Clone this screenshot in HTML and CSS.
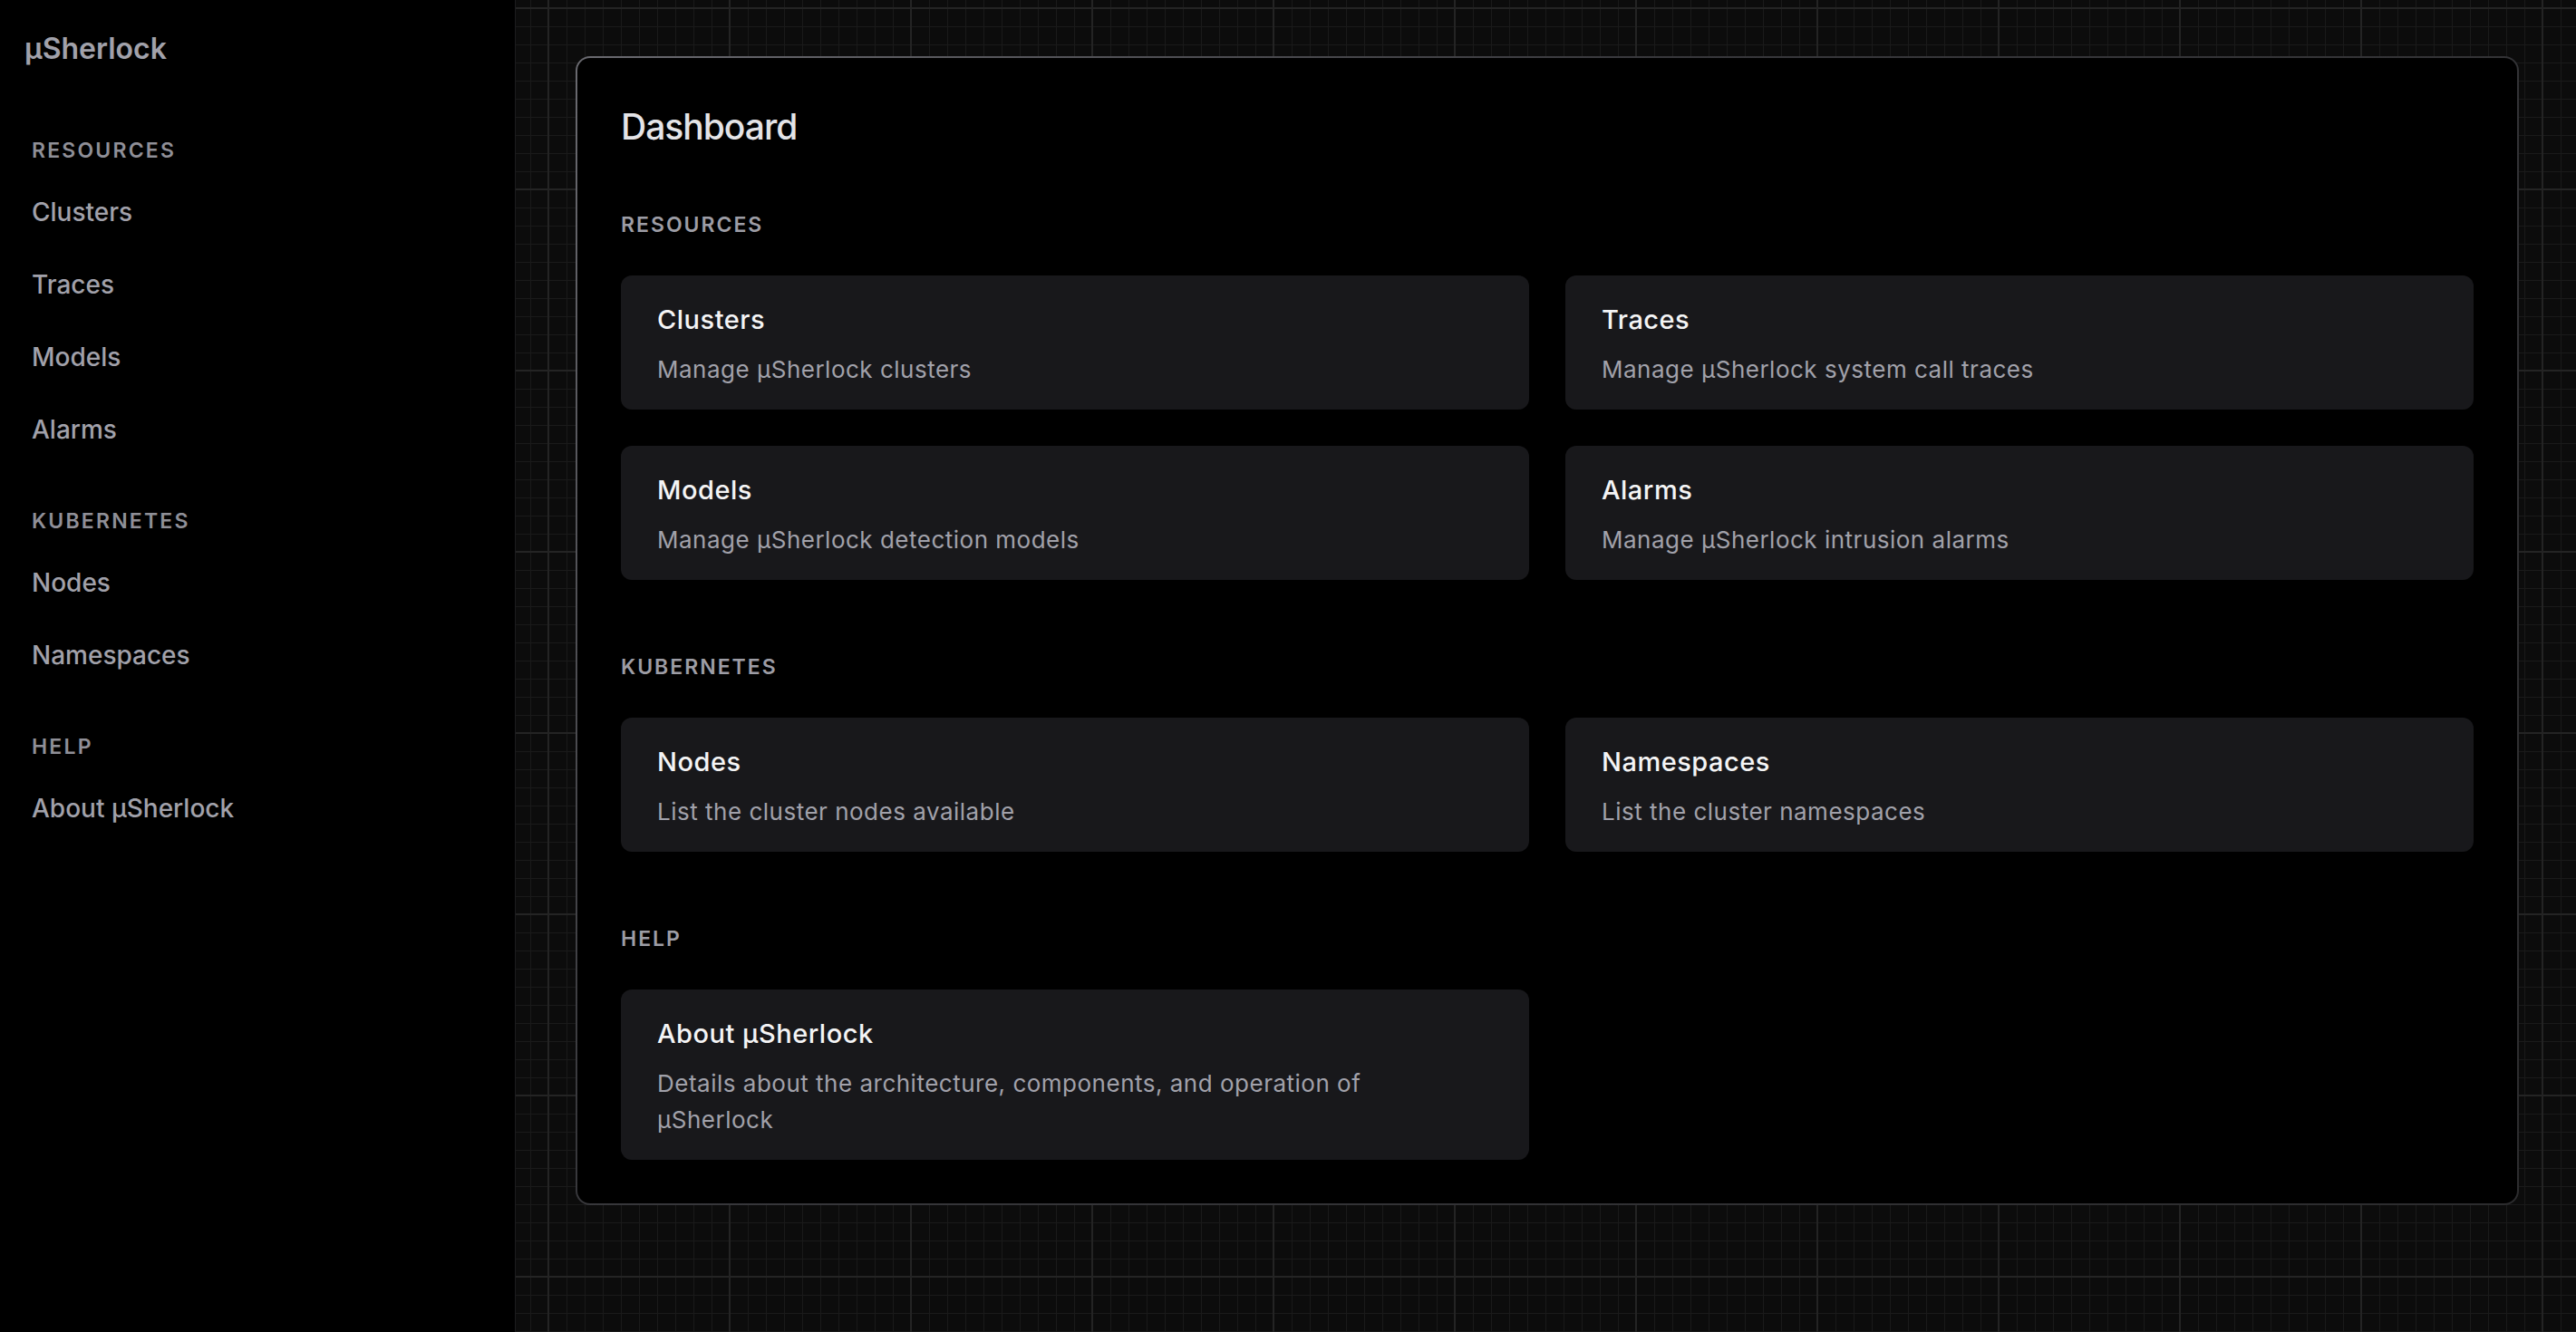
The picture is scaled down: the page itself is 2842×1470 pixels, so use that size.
FILE: index.html
```html
<!DOCTYPE html>
<html lang="en">
<head>
<meta charset="utf-8">
<title>µSherlock — Dashboard</title>
<link rel="stylesheet" href="styles.css">
</head>
<body>
<div class="app">
  <aside class="sidebar">
    <div class="logo">µSherlock</div>
    <nav class="nav">
      <div class="nav-section">
        <div class="nav-label">Resources</div>
        <a class="nav-item" href="#">Clusters</a>
        <a class="nav-item" href="#">Traces</a>
        <a class="nav-item" href="#">Models</a>
        <a class="nav-item" href="#">Alarms</a>
      </div>
      <div class="nav-section">
        <div class="nav-label">Kubernetes</div>
        <a class="nav-item" href="#">Nodes</a>
        <a class="nav-item" href="#">Namespaces</a>
      </div>
      <div class="nav-section">
        <div class="nav-label">Help</div>
        <a class="nav-item" href="#">About µSherlock</a>
      </div>
    </nav>
  </aside>
  <main class="main">
    <section class="panel">
      <h1 class="title">Dashboard</h1>
      <div class="groups">
        <div class="group">
          <h2 class="group-label">Resources</h2>
          <div class="cards">
            <a class="card" href="#"><div class="card-title">Clusters</div><div class="card-desc">Manage µSherlock clusters</div></a>
            <a class="card" href="#"><div class="card-title">Traces</div><div class="card-desc">Manage µSherlock system call traces</div></a>
            <a class="card" href="#"><div class="card-title">Models</div><div class="card-desc">Manage µSherlock detection models</div></a>
            <a class="card" href="#"><div class="card-title">Alarms</div><div class="card-desc">Manage µSherlock intrusion alarms</div></a>
          </div>
        </div>
        <div class="group">
          <h2 class="group-label">Kubernetes</h2>
          <div class="cards">
            <a class="card" href="#"><div class="card-title">Nodes</div><div class="card-desc">List the cluster nodes available</div></a>
            <a class="card" href="#"><div class="card-title">Namespaces</div><div class="card-desc">List the cluster namespaces</div></a>
          </div>
        </div>
        <div class="group">
          <h2 class="group-label">Help</h2>
          <div class="cards">
            <a class="card" href="#"><div class="card-title">About µSherlock</div><div class="card-desc card-desc-narrow">Details about the architecture, components, and operation of µSherlock</div></a>
          </div>
        </div>
      </div>
    </section>
  </main>
</div>
</body>
</html>
```
FILE: styles.css
```css
html, body {
  margin: 0;
  padding: 0;
  background: #000;
}
body {
  font-family: Inter, "Noto Sans", sans-serif;
  -webkit-font-smoothing: antialiased;
}
.app {
  display: flex;
  min-height: 100vh;
}
.sidebar {
  width: 569px;
  flex: none;
  box-sizing: border-box;
  border-right: 1px solid #1c1c1e;
  background: #000;
  padding: 34px 27px;
}
.logo {
  font-size: 32px;
  line-height: 40px;
  font-weight: 600;
  color: #a1a1aa;
}
.nav {
  margin-top: 76px;
  padding-left: 8px;
  display: flex;
  flex-direction: column;
  gap: 45px;
}
.nav-label {
  font-size: 23px;
  line-height: 32px;
  font-weight: 600;
  letter-spacing: 2.2px;
  text-transform: uppercase;
  color: #8f8f97;
  margin-bottom: 12px;
}
.nav-item {
  display: block;
  font-size: 28px;
  line-height: 40px;
  padding: 20px 0;
  font-weight: 500;
  color: #a1a1aa;
  text-decoration: none;
}
.main {
  flex: 1;
  padding: 62px 63px 62px 66px;
  background-color: #0c0c0c;
  background-image:
    linear-gradient(to right, #242424 2px, transparent 2px),
    linear-gradient(to bottom, #242424 2px, transparent 2px),
    linear-gradient(to right, #1a1a1a 1px, transparent 1px),
    linear-gradient(to bottom, #1a1a1a 1px, transparent 1px);
  background-size: 200px 200px, 200px 200px, 20px 20px, 20px 20px;
  background-position: 35px 8px, 35px 8px, 16px 9px, 16px 9px;
}
.panel {
  border: 2px solid transparent;
  border-radius: 16px;
  background:
    linear-gradient(#000, #000) padding-box,
    linear-gradient(135deg, #6a6a70 0%, #38383c 35%, #2c2c2e 100%) border-box;
  padding: 48px;
}
.title {
  margin: 0 0 64px;
  font-size: 39px;
  line-height: 56px;
  font-weight: 500;
  letter-spacing: -1px;
  color: #e4e4e7;
}
.groups {
  display: flex;
  flex-direction: column;
  gap: 80px;
}
.group-label {
  margin: 0 0 40px;
  font-size: 23px;
  line-height: 32px;
  font-weight: 600;
  letter-spacing: 2px;
  text-transform: uppercase;
  color: #9d9da5;
}
.cards {
  display: grid;
  grid-template-columns: 1fr 1fr;
  gap: 40px;
}
.card {
  display: block;
  background: #18181b;
  border-radius: 12px;
  padding: 29px 40px 24px;
  text-decoration: none;
}
.card-title {
  font-size: 29px;
  line-height: 40px;
  font-weight: 500;
  letter-spacing: 0.5px;
  color: #f4f4f5;
}
.card-desc {
  margin-top: 15px;
  font-size: 26px;
  line-height: 40px;
  letter-spacing: 0.5px;
  color: #a1a1aa;
}
.card-desc-narrow {
  max-width: 860px;
}
```
